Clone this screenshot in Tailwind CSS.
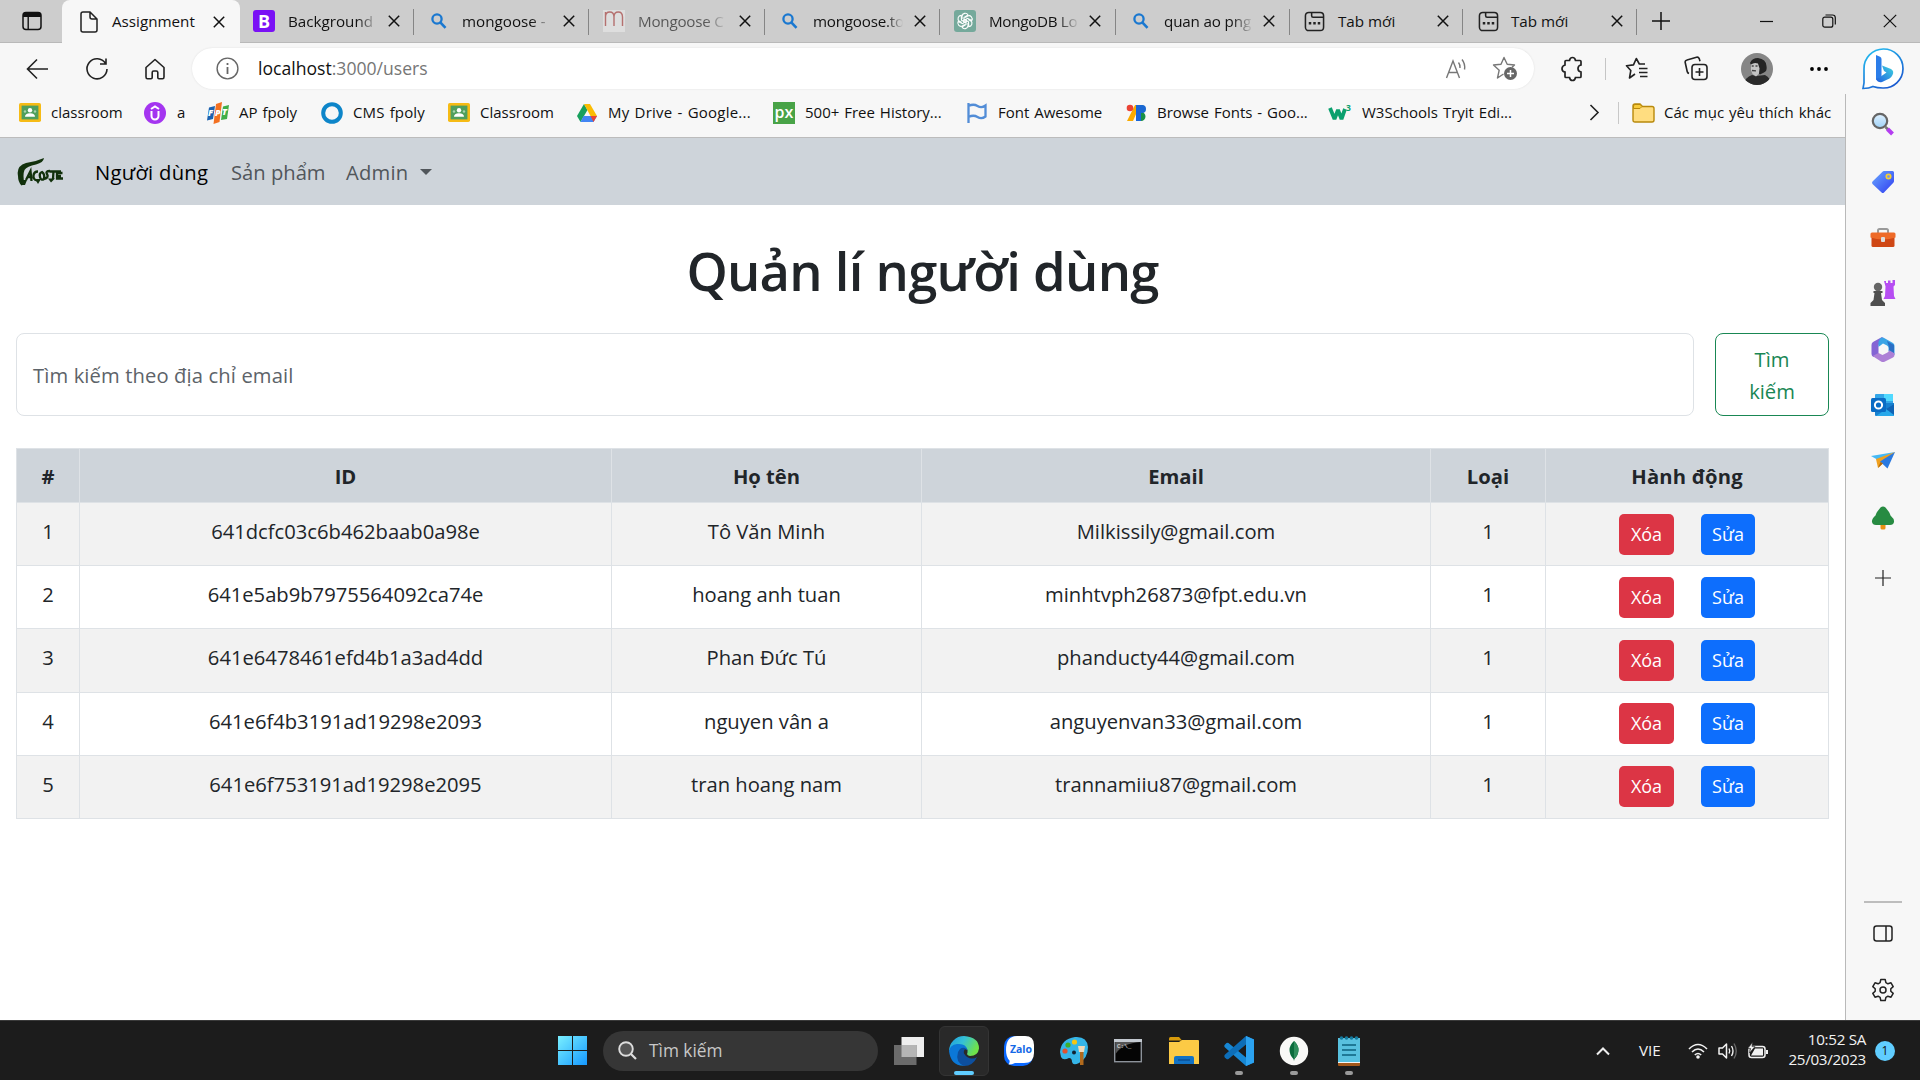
<!DOCTYPE html>
<html lang="vi">
<head>
<meta charset="utf-8">
<title>Assignment</title>
<script src="https://cdn.jsdelivr.net/npm/@tailwindcss/browser@4"></script>
</head>
<body class="h-[1080px] w-[1920px] overflow-hidden bg-white font-['Open_Sans','Noto_Sans',sans-serif] text-[#212529]">
<svg class="hidden">
  <defs>
    <symbol id="x" viewBox="0 0 12 12"><path d="M.8.8l10.400 10.400M11.200.8L.8 11.200" stroke="#111" stroke-width="1.500" fill="none"/></symbol>
    <symbol id="find" viewBox="0 0 16 16"><circle cx="6" cy="6" r="4.600" stroke="#1a78d0" stroke-width="2.300" fill="none"/><path d="M9.300 9.300L14.500 14.800" stroke="#1a78d0" stroke-width="2.600"/></symbol>
    <symbol id="newtab" viewBox="0 0 22 22"><g fill="none" stroke="#222" stroke-width="1.600"><rect x="1.500" y="1.500" width="19" height="19" rx="3.500"/><path d="M8 1.500v3.500q0 1.500 1.500 1.500h11" /></g><path d="M5 11.500h2.600v2.600H5zM9.700 11.500h2.600v2.600H9.700zM14.400 11.500H17v2.600h-2.600z" fill="#222"/></symbol>
    <symbol id="room" viewBox="0 0 22 19"><rect width="22" height="19" rx="1.800" fill="#f6bb15"/><rect x="2.600" y="2.600" width="16.800" height="13.800" fill="#4f9f5d"/><circle cx="11" cy="7.200" r="2.200" fill="#fff"/><path d="M6 13.800q0-3.500 5-3.500t5 3.500z" fill="#fff"/><circle cx="6" cy="8.500" r="1.200" fill="#a7d5ae"/><circle cx="16" cy="8.500" r="1.200" fill="#a7d5ae"/></symbol>
  </defs>
</svg>

<!-- Tab strip -->
<header class="flex h-[43px] border-b border-[#b9b9b9] bg-[#cdcdcd] text-[15.200px] text-[#111]">
  <div class="flex w-[62px] items-center pl-[22px]">
    <svg class="h-5 w-5" viewBox="0 0 20 20"><rect x="1" y="1.500" width="18" height="17" rx="3" fill="none" stroke="#111" stroke-width="1.500"/><path d="M1 6V4q0-3 3-3h12q3 0 3 3v2zM5.500 6h1.400v12H5.500z" fill="#111"/></svg>
  </div>
  <div class="flex h-[43px] w-[178px] items-center rounded-t-lg bg-[#f7f7f7] pl-[18px]">
    <svg class="h-[22px] w-[18px]" viewBox="0 0 18 22"><path d="M3 1h7l7 7v11q0 2-2 2H3q-2 0-2-2V3q0-2 2-2zM10 1v5q0 2 2 2h5" fill="none" stroke="#222" stroke-width="1.500"/></svg>
    <span class="ml-3.5 w-[101px]">Assignment</span>
    <svg class="h-3 w-3"><use href="#x"/></svg>
  </div>
  <div class="flex w-[173px] items-center pl-[13px]">
    <svg class="h-[22px] w-[22px]" viewBox="0 0 22 22"><rect width="22" height="22" rx="3" fill="#7a11f5"/><text x="11" y="17.500" text-anchor="middle" font-size="18" font-weight="700" fill="#fff">B</text></svg>
    <span class="ml-[13px] w-[86px] overflow-hidden whitespace-nowrap bg-linear-to-r from-[#111] from-80% to-[#aaa] bg-clip-text text-transparent">Background</span>
    <svg class="ml-[14px] h-3 w-3"><use href="#x"/></svg>
  </div>
  <i class="mt-[9px] h-[26px] w-px bg-[#858585]"></i>
  <div class="flex w-[174px] items-center pl-[17px]">
    <svg class="h-4 w-4"><use href="#find"/></svg>
    <span class="ml-[15px] w-[86px] overflow-hidden whitespace-nowrap bg-linear-to-r from-[#111] from-80% to-[#aaa] bg-clip-text text-transparent">mongoose -</span>
    <svg class="ml-[15px] h-3 w-3"><use href="#x"/></svg>
  </div>
  <i class="mt-[9px] h-[26px] w-px bg-[#858585]"></i>
  <div class="flex w-[175px] items-center pl-[14px]">
    <svg class="h-[22px] w-[22px]" viewBox="0 0 22 22"><path d="M0 0h22v22H0z" fill="#dedede"/><path d="M2.500 16V2M2.500 7q0-5 4.250-5T11 7v9M11 7q0-5 4.250-5t4.250 5v9" fill="none" stroke="#b5706f" stroke-width="1.400"/></svg>
    <span class="ml-[13px] w-[89px] overflow-hidden whitespace-nowrap bg-linear-to-r from-[#555] from-75% to-[#ccc] bg-clip-text tracking-[-.015em] text-transparent">Mongoose C</span>
    <svg class="ml-3 h-3 w-3"><use href="#x"/></svg>
  </div>
  <i class="mt-[9px] h-[26px] w-px bg-[#858585]"></i>
  <div class="flex w-[174px] items-center pl-[17px]">
    <svg class="h-4 w-4"><use href="#find"/></svg>
    <span class="ml-[15px] w-[90px] overflow-hidden whitespace-nowrap bg-linear-to-r from-[#111] from-80% to-[#ccc] bg-clip-text tracking-[-.015em] text-transparent">mongoose.to</span>
    <svg class="ml-[11px] h-3 w-3"><use href="#x"/></svg>
  </div>
  <i class="mt-[9px] h-[26px] w-px bg-[#858585]"></i>
  <div class="flex w-[175px] items-center pl-[14px]">
    <svg class="h-[22px] w-[22px]" viewBox="0 0 22 22"><rect width="22" height="22" rx="3" fill="#75a99b"/><g fill="none" stroke="#fff" stroke-width="1.100"><g id="knot"><path d="M8 9V6.200a3.200 3.200 0 0 1 6-1.200L10 7.500V13"/></g><use href="#knot" transform="rotate(60 11 11)"/><use href="#knot" transform="rotate(120 11 11)"/><use href="#knot" transform="rotate(180 11 11)"/><use href="#knot" transform="rotate(240 11 11)"/><use href="#knot" transform="rotate(300 11 11)"/></g></svg>
    <span class="ml-[13px] w-[90px] overflow-hidden whitespace-nowrap bg-linear-to-r from-[#111] from-75% to-[#ccc] bg-clip-text tracking-[-.02em] text-transparent">MongoDB Lo</span>
    <svg class="ml-[10px] h-3 w-3"><use href="#x"/></svg>
  </div>
  <i class="mt-[9px] h-[26px] w-px bg-[#858585]"></i>
  <div class="flex w-[173px] items-center pl-[17px]">
    <svg class="h-4 w-4"><use href="#find"/></svg>
    <span class="ml-[15px] w-[89px] overflow-hidden whitespace-nowrap bg-linear-to-r from-[#111] from-75% to-[#ccc] bg-clip-text tracking-[-.01em] text-transparent">quan ao png</span>
    <svg class="ml-[10px] h-3 w-3"><use href="#x"/></svg>
  </div>
  <i class="mt-[9px] h-[26px] w-px bg-[#858585]"></i>
  <div class="flex w-[172px] items-center pl-[14px]">
    <svg class="h-[21px] w-[21px]"><use href="#newtab"/></svg>
    <span class="ml-[13px] w-[99px]">Tab mới</span>
    <svg class="h-3 w-3"><use href="#x"/></svg>
  </div>
  <i class="mt-[9px] h-[26px] w-px bg-[#858585]"></i>
  <div class="flex w-[173px] items-center pl-[15px]">
    <svg class="h-[21px] w-[21px]"><use href="#newtab"/></svg>
    <span class="ml-[12px] w-[100px]">Tab mới</span>
    <svg class="h-3 w-3"><use href="#x"/></svg>
  </div>
  <i class="mt-[9px] h-[26px] w-px bg-[#858585]"></i>
  <div class="flex flex-1 items-center pl-[14px]">
    <svg class="h-5 w-5" viewBox="0 0 20 20"><path d="M10 1v18M1 10h18" stroke="#111" stroke-width="1.500"/></svg>
    <svg class="ml-[89px] h-[14px] w-[14px]" viewBox="0 0 14 14"><path d="M0 7.500h13" stroke="#111" stroke-width="1.200"/></svg>
    <svg class="ml-[48px] h-[14px] w-[14px]" viewBox="0 0 14 14"><g fill="none" stroke="#111" stroke-width="1.200"><rect x=".8" y="3.200" width="10" height="10" rx="2"/><path d="M3.500 1h7q2.800 0 2.800 2.800v6.700"/></g></svg>
    <svg class="ml-[47px] h-[14px] w-[14px]" viewBox="0 0 14 14"><path d="M.8.8l12.400 12.400M13.200.8L.8 13.200" stroke="#111" stroke-width="1.200"/></svg>
  </div>
</header>

<!-- Address bar -->
<div class="flex h-[51px] items-center bg-[#f7f7f7]">
  <svg class="ml-[26px] h-[22px] w-[23px]" viewBox="0 0 23 22"><path d="M22 11H1.500M11 1.500L1.500 11l9.500 9.500" fill="none" stroke="#222" stroke-width="1.600"/></svg>
  <svg class="ml-[36px] h-6 w-6" viewBox="0 0 24 24"><path d="M20.500 6.500A10 10 0 1 0 22 12M21 1.500V7h-6" fill="none" stroke="#222" stroke-width="1.600"/></svg>
  <svg class="ml-[35px] h-[22px] w-[22px]" viewBox="0 0 22 22"><path d="M2 9.500L11 1.500l9 8v9.500q0 1.700-1.500 1.700h-3.500q-1.200 0-1.200-1.200v-5q0-1.500-1.500-1.500h-2.600q-1.500 0-1.500 1.500v5q0 1.200-1.200 1.200H3.500Q2 20.700 2 19z" fill="none" stroke="#222" stroke-width="1.600" stroke-linejoin="round"/></svg>
  <div class="ml-[26px] flex h-[41px] w-[1342px] items-center rounded-full bg-white pl-6 shadow-[0_0_2px_#ddd]">
    <svg class="h-[23px] w-[23px]" viewBox="0 0 23 23"><circle cx="11.500" cy="11.500" r="10.400" fill="none" stroke="#666" stroke-width="1.400"/><path d="M11.500 10v7M11.500 6v2" stroke="#666" stroke-width="1.800"/></svg>
    <span class="ml-[19px] w-[1187px] text-[17.600px] text-[#767676]"><span class="text-[#111]">localhost</span>:3000/users</span>
    <svg class="h-[22px] w-[22px]" viewBox="0 0 22 22"><path d="M1.500 20L8 3l6.500 17M3.800 14.500h8.400M13.500 4.500q2 2.500 1.500 5.500M17 1.500q3.500 4.500 2.500 10" fill="none" stroke="#777" stroke-width="1.400"/></svg>
    <svg class="ml-[25px] h-[25px] w-[26px]" viewBox="0 0 26 25"><path d="M11.500 18l-6 4 1.700-7.800L1.500 9l7.500-.8L12 1.500l3.200 6.700 7.300.8-2.500 2.200" fill="none" stroke="#777" stroke-width="1.400" stroke-linejoin="round"/><circle cx="18.500" cy="17.500" r="6.500" fill="#666"/><path d="M18.500 14v7M15 17.500h7" stroke="#fff" stroke-width="1.500"/></svg>
  </div>
  <svg class="ml-[26px] h-[26px] w-[24px]" viewBox="0 0 24 26"><path d="M8 4.500h1.500q.5-3 3-3t3 3H20q1 0 1 1V9q-3 .5-3 3.500t3 3.500v4.500q0 1-1 1h-4.500q-.5 3-3 3t-3-3H6q-1 0-1-1V16q-3-.5-3-3.300T5 9V5.500q0-1 1-1z" fill="none" stroke="#222" stroke-width="1.700"/></svg>
  <i class="ml-[21px] h-[22px] w-px bg-[#c5c5c5]"></i>
  <svg class="ml-[19px] h-[23px] w-[24px]" viewBox="0 0 24 23"><path d="M10 17l-5.500 4 1.300-7.500L1.500 8.700l7-.8L11.300 1.500l3 5.500H20M14 11.500h8.500M14 15.500h8.500M15 19.500h7.500" fill="none" stroke="#222" stroke-width="1.600" stroke-linejoin="round"/></svg>
  <svg class="ml-[35px] h-[25px] w-[24px]" viewBox="0 0 24 25"><g fill="none" stroke="#222" stroke-width="1.600"><rect x="8" y="8.500" width="15" height="15" rx="3"/><path d="M15.500 12v8M11.500 16h8M5 17.500q-1.500-.5-1.800-2L1.200 6.500Q.8 4.500 3 4l9.500-2.800q2-.4 2.700 1.400l.8 2.700"/></g></svg>
  <svg class="ml-[33px] h-8 w-8" viewBox="0 0 32 32"><defs><clipPath id="face"><circle cx="16" cy="16" r="16"/></clipPath></defs><g clip-path="url(#face)"><path d="M0 0h32v32H0z" fill="#868686"/><path d="M3 32q1-8 8-10l4 1 9-1q6 3 6 10z" fill="#2b2b2b"/><path d="M9 10q2-5 8-5 8 1 8.500 8 1 5-2.500 6.500l-4 2-7-6z" fill="#242424"/><path d="M10 11.500q3-2.500 7-1l1.500 5-.5 5-3 3-3.500-2.500-1.500-4z" fill="#c4c4c4"/><path d="M11 17.500l4 .3M10.700 13h2M14.500 13h2" fill="none" stroke="#444" stroke-width="1.300"/></g></svg>
  <svg class="ml-[36px] h-[6px] w-[20px]" viewBox="0 0 20 6"><circle cx="3" cy="3" r="1.900"/><circle cx="10" cy="3" r="1.900"/><circle cx="17" cy="3" r="1.900"/></svg>
  <svg class="ml-[32px] h-[43px] w-[43px]" viewBox="0 0 43 43"><defs><linearGradient id="bg1" x1="0" y1="0" x2=".6" y2="1"><stop stop-color="#25c5f2"/><stop offset="1" stop-color="#1b5cd0"/></linearGradient><linearGradient id="bg2" x1="0" y1="1" x2="1" y2="0"><stop stop-color="#1f5de0"/><stop offset="1" stop-color="#3fd6e0"/></linearGradient></defs><path d="M2 41.500q1.500-5 1-11.500V22A19.500 19.500 0 1 1 22 41q-6 0-10-1.500-4 2-10 2z" fill="#fff" stroke="url(#bg1)" stroke-width="1.700"/><path d="M15 8l4 1.800q1.500.7 1.500 2.200v17.500L15 33z" fill="#2b7de9"/><path d="M15 32l5.500-3 5-3.500-2.500-1.500-2-5.500 9 3.500q3.500 2 1.500 6-1 2-3 3.500L21 35q-4 1-6-3z" fill="url(#bg2)"/></svg>
</div>

<div class="flex h-[926px]">
  <main class="w-[1845px]">
    <!-- Bookmarks -->
    <div class="flex h-[44px] items-center border-b border-[#bcbcbc] bg-[#f7f7f7] pb-[6px] pl-[19px] text-[15px] whitespace-nowrap text-[#111] [word-spacing:1px]">
      <div class="flex w-[125px] items-center gap-2.5"><svg class="h-[19px] w-[22px]"><use href="#room"/></svg>classroom</div>
      <div class="flex w-[63px] items-center gap-[11px]"><svg class="h-[22px] w-[22px]" viewBox="0 0 22 22"><circle cx="11" cy="11" r="11" fill="#a435f0"/><path d="M7.500 9v5a3.500 3.500 0 0 0 7 0V9M7 7l4-2.500L15 7" fill="none" stroke="#fff" stroke-width="2"/></svg>a</div>
      <div class="flex w-[114px] items-center gap-2.5"><svg class="h-[22px] w-[22px]" viewBox="0 0 22 22"><path d="M2 5.500L8 4l-2 13-6 1.500z" fill="#1c62b0"/><path d="M9 2l6-2-2.500 20-6 2z" fill="#f37021"/><path d="M16 4.500l6-1.500-2 14-6 1z" fill="#3fae49"/><g font-size="9" font-weight="800" font-style="italic" fill="#fff"><text x="1" y="14">F</text><text x="8" y="14">P</text><text x="15" y="13">T</text></g></svg>AP fpoly</div>
      <div class="flex w-[127px] items-center gap-2.5"><svg class="h-[22px] w-[22px]" viewBox="0 0 22 22"><circle cx="11" cy="11" r="8.800" fill="none" stroke="#0d85c9" stroke-width="4"/></svg><span class="tracking-[.01em]">CMS fpoly</span></div>
      <div class="flex w-[128px] items-center gap-2.5"><svg class="h-[19px] w-[22px]"><use href="#room"/></svg>Classroom</div>
      <div class="flex w-[197px] items-center gap-2.5"><svg class="h-[20px] w-[22px]" viewBox="0 0 22 20"><path d="M8 1L1 13l3.500 6L11.500 7z" fill="#17a05d"/><path d="M8 1h6l7 12h-6.500z" fill="#fbbc04"/><path d="M7.500 13H21l-3.500 6h-13z" fill="#4285f4"/><path d="M14.500 13H21l-3.500 6z" fill="#ea4335"/></svg><span class="tracking-[.015em]">My Drive - Google...</span></div>
      <div class="flex w-[193px] items-center gap-2.5"><svg class="h-[22px] w-[22px]" viewBox="0 0 22 22"><path d="M0 0h22v22H0z" fill="#48a347"/><text x="11" y="15.500" font-size="16" font-weight="600" text-anchor="middle" fill="#fff">px</text></svg>500+ Free History...</div>
      <div class="flex w-[160px] items-center gap-2.5"><svg class="h-[20px] w-[22px]" viewBox="0 0 22 20"><path d="M2.500 0v20M2.500 3q5-2.500 9 0t8-.5v11q-4 3-8 .5t-9 0" fill="none" stroke="#528dd7" stroke-width="2.300"/></svg>Font Awesome</div>
      <div class="flex w-[203px] items-center gap-[9px]"><svg class="h-[18px] w-[22px]" viewBox="0 0 22 18"><path d="M9 1h5L7 17H1z" fill="#f9ab00"/><circle cx="4" cy="4" r="3.300" fill="#ea4335"/><path d="M10 1h5v16h-5z" fill="#1a66d8"/><path d="M15 1a4 4 0 0 1 0 8zM15 8a4.500 4.500 0 0 1 0 9z" fill="#188f46"/><path d="M14 1h2a4 4 0 0 1 0 8h-2z" fill="#1967d2"/></svg>Browse Fonts - Goo...</div>
      <div class="flex w-[259px] items-center gap-[11px]"><svg class="h-[18px] w-[22px] overflow-visible" viewBox="0 0 22 18"><path d="M1 4l4.500 11L9 6l3.500 9L16 5" fill="none" stroke="#0aa06e" stroke-width="3.800" stroke-linejoin="bevel"/><text x="17" y="7" font-size="8.500" font-weight="700" fill="#0aa06e">3</text></svg>W3Schools Tryit Edi...</div>
      <svg class="h-[17px] w-[12px]" viewBox="0 0 12 17"><path d="M2.500 1l7.500 7.500L2.500 16" fill="none" stroke="#222" stroke-width="1.600"/></svg>
      <i class="ml-[18px] mr-[13px] h-[22px] w-px bg-[#c8c8c8]"></i>
      <svg class="mr-[9px] h-[20px] w-[23px]" viewBox="0 0 23 20"><path d="M1 3q0-2 2-2h5l2.500 2.500H20q2 0 2 2V17q0 2-2 2H3q-2 0-2-2z" fill="#ffdd80" stroke="#b8890b" stroke-width="1.400"/><path d="M1.500 5.500V3q0-1.500 1.500-1.500h5l2 2-2 2z" fill="#f8cb3a" stroke="#b8890b"/></svg>
      <span>Các mục yêu thích khác</span>
    </div>

    <!-- Site navigation -->
    <nav class="flex h-[67px] items-center bg-[#ced4da] pl-[17px] text-[20.200px] leading-7">
      <svg class="h-[28px] w-[46px]" viewBox="0 0 46 28"><path d="M1 18Q-1 8 9 5q9-1 18-5-.5 4.500-8 6.500Q10 8 7.500 12q-2 5 0 14l-3 1.500Q1 24 1 18z" fill="#12310c"/><g fill="none" stroke="#12310c" stroke-width="2.300"><path d="M9 22l4.500-9 1 10M10 19h4M21 13.500q-4 0-4.500 4t3.500 5M25 14q-3 1-2 5t4 2q1-5-2-7zM33 13q-5 0-3 3t-2 5M33 13.500h11M36.500 13l-.5 8M45.500 15H40v5.500h6M40 18h4"/></g><path d="M4 22h6l-2 5H5zM18 21h6l-3 5zM31 20.500l7 0-4 4z" fill="#12310c"/></svg>
      <a class="ml-8 mt-px w-[136px] tracking-[.015em] whitespace-nowrap text-black">Người dùng</a>
      <a class="mt-px w-[115px] whitespace-nowrap text-[#51565b]">Sản phẩm</a>
      <a class="mt-px w-[74px] tracking-[.01em] text-[#51565b]">Admin</a>
      <i class="mt-px border-x-[6px] border-t-[6px] border-x-transparent border-t-[#51565b]"></i>
    </nav>

    <!-- User management -->
    <section class="px-4 text-[20.200px]">
      <h1 class="mt-[32px] flex h-[68px] items-center justify-center text-[52.500px] font-semibold tracking-[-.014em]">Quản lí người dùng</h1>
      <form class="mt-[28px] flex h-[83px] gap-[21px]">
        <div class="flex w-[1678px] items-center rounded-[8px] border border-[#dee2e6] pt-px pl-4 tracking-[.006em] text-[#5d6369]">Tìm kiếm theo địa chỉ email</div>
        <button type="button" class="h-[83px] w-[114px] rounded-[8px] border border-[#198754] leading-8 text-[#198754]">Tìm<br>kiếm</button>
      </form>
      <table class="mt-[32px] w-[1813px] table-fixed border-collapse text-center">
        <colgroup><col class="w-[63px]"><col class="w-[532px]"><col class="w-[310px]"><col class="w-[509px]"><col class="w-[115px]"><col class="w-[283px]"></colgroup>
        <thead>
          <tr class="h-[54px] bg-[#ced4da]"><th class="border border-[#dee2e6] pt-0.5">#</th><th class="border border-[#dee2e6] pt-0.5">ID</th><th class="border border-[#dee2e6] pt-0.5">Họ tên</th><th class="border border-[#dee2e6] pt-0.5">Email</th><th class="border border-[#dee2e6] pt-0.5">Loại</th><th class="border border-[#dee2e6] pt-0.5 tracking-[.01em]">Hành động</th></tr>
        </thead>
        <tbody id="users"></tbody>
      </table>
    </section>
  </main>

  <!-- Sidebar -->
  <aside class="flex w-[75px] flex-col items-center border-l border-[#b9b9b9] bg-[#f7f7f7] pr-px">
    <svg class="mt-[18px] h-6 w-6" viewBox="0 0 24 24"><defs><linearGradient id="lens" x2="0" y2="1"><stop stop-color="#e0f1ff"/><stop offset="1" stop-color="#9fd2f7"/></linearGradient></defs><path d="M14.500 15l2.500 2.500" stroke="#777" stroke-width="2.500"/><path d="M16.500 17l5 5" stroke="#b43df0" stroke-width="4"/><circle cx="9" cy="9" r="7.200" fill="url(#lens)" stroke="#666" stroke-width="2.200"/></svg>
    <svg class="mt-[34px] h-6 w-6" viewBox="0 0 24 24"><defs><linearGradient id="tg" x2="1" y2="1"><stop stop-color="#6aa9ff"/><stop offset="1" stop-color="#2f3bf0"/></linearGradient></defs><path d="M13 1h8.500Q23 1 23 2.500V11q0 1-.7 1.700L13 22.500q-1.200 1-2.400 0L1.500 14q-1-1.200 0-2.400L11.500 1.700Q12 1 13 1z" fill="url(#tg)"/><circle cx="17.500" cy="6.500" r="2.200" fill="#6c8cff" stroke="#f5cf2f" stroke-width="1.700"/></svg>
    <svg class="mt-[33px] h-[22px] w-[26px]" viewBox="0 0 26 22"><path d="M8 6V3.500Q8 2 9.500 2h7Q18 2 18 3.500V6" fill="none" stroke="#9a9a9a" stroke-width="2"/><rect x="1.500" y="6" width="23" height="14" rx="1.500" fill="#cf4715"/><path d="M.5 7Q.5 5.500 2 5.500h22q1.500 0 1.500 1.500v3.500q-6 2-12.500 2T.5 10.500z" fill="#ee6a28"/><rect x="11" y="10" width="4" height="5" rx="1" fill="#ddd"/></svg>
    <svg class="mt-[30px] h-[28px] w-[27px]" viewBox="0 0 27 28"><path d="M15 2h2v2h2V1.500h2.500V4h2V1h2.500v5l-1.500 1.500L25 17l1.500 3H14.500l1.500-3 .5-9.500z" fill="#b64df2"/><circle cx="9" cy="8" r="4.200" fill="#666"/><path d="M4.500 12h9v2h-1.500l1 7 3 3v3H1.500v-3l3-3 1-7H4.500z" fill="#4f4f4f"/></svg>
    <svg class="mt-[29px] h-[26px] w-[24px]" viewBox="0 0 24 26"><path d="M11 1L2 6Q.5 7 .5 9v9q0 2 2 3l5-3V10q0-2 2-3l5-3z" fill="#8464d4"/><path d="M9 2.500q2.500-2 5 0L22 7q1.500 1 1.500 3v9l-6-4v-3q0-1.500-1.500-2.500l-4-2L7.500 11V6z" fill="#3aa4e6"/><path d="M1.500 20l6-3 4 2 5-2.500q1.500-1 1.500-2.500l5.500 3v2q0 1.500-1.500 2.500l-8 4q-2 1-4 0z" fill="#ad80d6"/><path d="M16 5l7 4v8l-5-3v-3z" fill="#2a6fc5"/><path d="M12.500 8.500l4.500 2.500v4.500l-4.500 2.500L8 15.500V11z" fill="#f7f7f7"/></svg>
    <svg class="mt-[31px] h-6 w-6" viewBox="0 0 24 24"><path d="M5 1h16q1 0 1 1v9H4V2q0-1 1-1z" fill="#33a6e8"/><path d="M13 1h9v7h-9z" fill="#50d9ff"/><path d="M4 10h19v12q0 1-1 1H5q-1 0-1-1z" fill="#1780d0"/><path d="M23 11v12H5z" fill="#28a8ea"/><path d="M23 11v11l-8-6z" fill="#0f63b5"/><rect x="0" y="5" width="15" height="14" rx="1.500" fill="#0a6cc5"/><circle cx="7.500" cy="12" r="3.600" fill="none" stroke="#fff" stroke-width="2"/></svg>
    <svg class="mt-[35px] h-[18px] w-6" viewBox="0 0 24 18"><path d="M24 0L0 4l7 4z" fill="#45b9f5"/><path d="M24 0L5 7l2 9 4-4z" fill="#f0a01e"/><path d="M24 0L9 9.500l7.500 7z" fill="#2979e0"/><path d="M7 16l5-4.500-2.500-1.500z" fill="#b4690b"/></svg>
    <svg class="mt-[36px] h-6 w-6" viewBox="0 0 24 24"><path d="M9.500 17h5v5q0 1.500-1.500 1.500h-2q-1.500 0-1.500-1.500z" fill="#e89113"/><path d="M9.500 1.500q2.500-2 5 0L18 6q1 1.500 1.500 3.500Q23.500 13 23 16q-.5 3-4 3H5q-3.500 0-4-3-.5-3 3.500-6.500Q5 7.500 6 6z" fill="#278b42"/></svg>
    <svg class="mt-[40px] h-4 w-4" viewBox="0 0 16 16"><path d="M8 0v16M0 8h16" stroke="#222" stroke-width="1.200"/></svg>
    <i class="mt-[315px] h-0.5 w-[38px] bg-[#bdbdbd]"></i>
    <svg class="mt-[22px] h-[17px] w-[20px]" viewBox="0 0 20 17"><rect x="1" y="1" width="18" height="15" rx="2.500" fill="none" stroke="#222" stroke-width="1.500"/><path d="M13 1v15" stroke="#222" stroke-width="1.500"/></svg>
    <svg class="mt-[36px] h-6 w-6" viewBox="0 0 24 24"><g fill="none" stroke="#222" stroke-width="1.500" stroke-linejoin="round"><path d="M9.800 1.500h4.400l.7 3.200 2 1.100 3.100-1 2.200 3.800-2.400 2.200v2.400l2.400 2.200-2.200 3.800-3.100-1-2 1.100-.7 3.200H9.800l-.7-3.200-2-1.100-3.100 1-2.200-3.800 2.400-2.200v-2.400L1.800 8.600 4 4.800l3.100 1 2-1.100z"/><circle cx="12" cy="12" r="3"/></g></svg>
  </aside>
</div>

<!-- Taskbar -->
<footer class="flex h-[60px] items-center border-t border-[#3a3a3a] bg-[#1c1c1c] pl-[558px]">
  <svg class="h-[29px] w-[29px]" viewBox="0 0 29 29"><defs><linearGradient id="win" x2="1" y2="1"><stop stop-color="#7af0ff"/><stop offset="1" stop-color="#1598ff"/></linearGradient></defs><path d="M0 0h14v14H0zM15 0h14v14H15zM0 15h14v14H0zM15 15h14v14H15z" fill="url(#win)"/></svg>
  <div class="ml-4 flex h-10 w-[275px] items-center rounded-full bg-[#363636] pl-[15px] text-[17.300px] text-[#c8c8c8]">
    <svg class="mr-[12px] h-[19px] w-[19px]" viewBox="0 0 19 19"><circle cx="8" cy="8" r="6.800" fill="#555" stroke="#ddd" stroke-width="1.900"/><path d="M13 13l5 5" stroke="#ddd" stroke-width="2.200"/></svg>Tìm kiếm
  </div>
  <svg class="ml-4 h-[28px] w-[30px]" viewBox="0 0 30 28"><path d="M7.500 0H30v20H7.500z" fill="#eee"/><path d="M0 8h22.500v20H0z" fill="#6b6b6b"/><path d="M7.500 8h15v12h-15z" fill="#b5b5b5"/></svg>
  <div class="ml-[15px] flex h-[50px] w-[50px] flex-col items-center rounded-md border border-[#343434] bg-[#292929] pt-[9px]">
    <svg class="h-[30px] w-[30px]" viewBox="0 0 30 30"><defs><linearGradient id="eg" x1="0" x2="1" y2=".4"><stop stop-color="#1c9be0"/><stop offset=".5" stop-color="#35c1d6"/><stop offset="1" stop-color="#6fe24a"/></linearGradient></defs><path d="M0 15A15 15 0 0 1 15 0q15 1 15 12.500Q29 20 21 20q-4-1-2.500-3.500 1-5-5-6Q4 9 0 15z" fill="url(#eg)"/><path d="M0 15Q1 9 8 8q9-1 10.500 6-6-3-8 3-.5 8 6 12.500Q2 31 0 15z" fill="#0b78d8"/><path d="M11 13q3-2 6-.5-3 2-2 5 3 5 8 5 3 0 5-1.500-4 9-13 9Q6 26 9 16z" fill="#0d4f9e"/></svg>
    <i class="mt-[5px] h-1 w-5 rounded-full bg-[#60cdff]"></i>
  </div>
  <svg class="ml-[15px] h-[30px] w-[30px]" viewBox="0 0 30 30"><rect width="29" height="30" rx="10" fill="#0a68ff"/><path d="M13 0h8q9 0 9 9v8q0 10-10 10h-9q-3 1.500-6.500 1.500 1.500-2 1-4Q2 21 2 14 2 0 13 0z" fill="#fff"/><text x="17" y="17" font-size="10.500" font-weight="700" text-anchor="middle" fill="#1468e6" textLength="22">Zalo</text></svg>
  <svg class="ml-[26px] h-[30px] w-[28px]" viewBox="0 0 28 30"><path d="M0 16Q1 3 15 1q12-1 13 10 0 11-9 16-6 3-7-1 0-4-3-4-6 3-8-1z" fill="#35b5e8"/><circle cx="5" cy="15" r="2.600" fill="#e0532f"/><circle cx="8" cy="9" r="2.600" fill="#3fae2a"/><circle cx="14.500" cy="6" r="2.600" fill="#f6c514"/><circle cx="14" cy="16.500" r="2" fill="#123"/><path d="M20 14h3.500v15H20z" fill="#b26a1c"/><path d="M18 10h7l-1 6h-5z" fill="#f1d9b8"/></svg>
  <svg class="ml-[26px] h-[24px] w-[28px]" viewBox="0 0 28 24"><rect x=".7" y=".7" width="26.600" height="22" fill="#050505" stroke="#8c929a" stroke-width="1.400"/><path d="M0 0h28v3H0z" fill="#c3c9d0"/><path d="M1.500 3h25q-18 1-25 12z" fill="#555"/><text x="3" y="9" font-size="6" font-family="Liberation Mono" fill="#eee">C:\_</text></svg>
  <svg class="ml-[27px] h-[27px] w-[30px]" viewBox="0 0 30 27"><path d="M0 1.500Q0 0 1.500 0H10l3 3.500H0z" fill="#d79a0b"/><path d="M0 5h10l3-2h16q1 0 1 1v23H0z" fill="#fcca45"/><path d="M5 27v-6q0-2 2-2h16q2 0 2 2v6z" fill="#1272c4"/><path d="M9 23h12" stroke="#0a4b8e" stroke-width="1.300"/></svg>
  <div class="ml-[25px] flex h-[50px] w-[30px] flex-col items-center pt-[10px]">
    <svg class="h-[30px] w-[30px]" viewBox="0 0 30 30"><path d="M22 0l8 3.500v23L22 30 1 11.500Q-.5 10 1 8.500L2.500 7Q3.500 6.500 4.500 7L22 21.500z" fill="#1787d4"/><path d="M22 0v8.500L4.500 23q-1 .5-2 0L.8 21.500q-1-1.500 0-2.800z" fill="#0d6eb8"/><path d="M22 0l8 3.500v23L22 30z" fill="#2ba2f0"/></svg>
    <i class="mt-[5px] h-1 w-2 shrink-0 rounded-full bg-[#9a9a9a]"></i>
  </div>
  <div class="ml-[25px] flex h-[50px] w-[30px] flex-col items-center pt-[10px]">
    <svg class="h-[30px] w-[30px]" viewBox="0 0 30 30"><circle cx="15" cy="15" r="14.200" fill="#f8f8f6"/><path d="M15 5q4.500 4 4.500 9t-4 9l-.5 2-.5-2q-4-4-4-9T15 5z" fill="#0b6b3c"/><path d="M15 5v18q4.500-4 4.500-9T15 5z" fill="#2f8d5b"/></svg>
    <i class="mt-[5px] h-1 w-2 shrink-0 rounded-full bg-[#9a9a9a]"></i>
  </div>
  <div class="ml-[25px] flex h-[50px] w-[30px] flex-col items-center pt-[10px]">
    <svg class="h-[30px] w-[22px]" viewBox="0 0 22 30"><path d="M0 24h22v5q0 1-1 1H1q-1 0-1-1z" fill="#a4581a"/><path d="M0 24h22v3H0z" fill="#f5f5f5"/><path d="M0 2h22v24H0z" fill="#58c1df"/><path d="M4 9h14M4 14h14M4 19h14" stroke="#0c617f" stroke-width="1.700"/><g fill="#14799d"><circle cx="3.500" cy="2" r="1.800"/><circle cx="8.500" cy="2" r="1.800"/><circle cx="13.500" cy="2" r="1.800"/><circle cx="18.500" cy="2" r="1.800"/></g></svg>
    <i class="mt-[5px] h-1 w-2 shrink-0 rounded-full bg-[#9a9a9a]"></i>
  </div>
  <div class="ml-auto flex items-center pr-[25px] text-[15.200px] text-[#f2f2f2]">
    <svg class="h-[10px] w-[14px]" viewBox="0 0 14 10"><path d="M1 8.500l6-6 6 6" fill="none" stroke="#eee" stroke-width="2"/></svg>
    <span class="ml-[29px] w-[49px]">VIE</span>
    <svg class="h-4 w-5" viewBox="0 0 20 16"><g fill="none" stroke="#f2f2f2" stroke-width="1.600"><path d="M1 6q9-9 18 0M4 9q6-6 12 0M6.800 12q3.200-3 6.400 0"/></g><circle cx="10" cy="14" r="1.800" fill="#f2f2f2"/></svg>
    <svg class="ml-[10px] h-[18px] w-5" viewBox="0 0 20 18"><path d="M1 6h3.500L8.500 2v14l-4-4H1z" fill="none" stroke="#f2f2f2" stroke-width="1.500" stroke-linejoin="round"/><path d="M11 6.500q1.500 2.500 0 5M13.500 4q3 5 0 10" fill="none" stroke="#f2f2f2" stroke-width="1.400"/><path d="M16 1.500q4.500 7.500 0 15" fill="none" stroke="#666" stroke-width="1.400"/></svg>
    <svg class="ml-[10px] h-[17px] w-5" viewBox="0 0 20 17"><rect x="1" y="4.500" width="16" height="11" rx="2.500" fill="none" stroke="#f2f2f2" stroke-width="1.500"/><path d="M7 6.500h8v7H3zM18 8h2v4h-2z" fill="#f2f2f2"/><path d="M4.500 0L0 6.500h2.500L1.500 11 7 4.500H4z" fill="#f2f2f2" stroke="#1c1c1c" stroke-width=".6"/></svg>
    <div class="ml-[18px] w-[80px] pb-1 text-right leading-5 tracking-[-.02em] whitespace-nowrap">10:52 SA<br>25/03/2023</div>
    <span class="ml-[9px] flex h-5 w-5 items-center justify-center rounded-full bg-[#60cdff] text-[12px] text-[#111]">1</span>
  </div>
</footer>

<script>
  const users = [
    ['641dcfc03c6b462baab0a98e', 'Tô Văn Minh', 'Milkissily@gmail.com'],
    ['641e5ab9b7975564092ca74e', 'hoang anh tuan', 'minhtvph26873@fpt.edu.vn'],
    ['641e6478461efd4b1a3ad4dd', 'Phan Đức Tú', 'phanducty44@gmail.com'],
    ['641e6f4b3191ad19298e2093', 'nguyen vân a', 'anguyenvan33@gmail.com'],
    ['641e6f753191ad19298e2095', 'tran hoang nam', 'trannamiiu87@gmail.com'],
  ];
  const cell = (text) => `<td class="border border-[#dee2e6] pb-1.5">${text}</td>`;
  document.getElementById('users').innerHTML = users.map(([id, name, mail], i) => `
    <tr class="h-[63.200px] odd:bg-[#f2f2f2]">
      ${cell(i + 1)}${cell(id)}${cell(name)}${cell(mail)}${cell(1)}
      <td class="border border-[#dee2e6]"><div class="flex justify-center gap-[27px] text-[18px]">
        <button class="h-[41px] w-[55px] rounded-[5px] bg-[#dc3545] text-white">Xóa</button>
        <button class="h-[41px] w-[54px] rounded-[5px] bg-[#0d6efd] text-white">Sửa</button>
      </div></td>
    </tr>`).join('');
</script>
</body>
</html>
